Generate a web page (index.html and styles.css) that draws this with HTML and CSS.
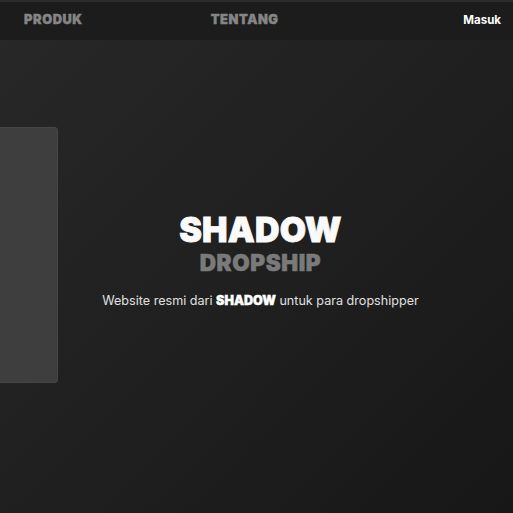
FILE: index.html
```html
<!DOCTYPE html>
<html lang="en">
<head>
    <meta charset="UTF-8">
    <meta name="viewport" content="width=device-width, initial-scale=1.0">
    <title>Shadow Dropship</title>
    <link rel="stylesheet" href="styles.css">
</head>
<body>
    <nav class="navbar">
        <a class="nav-link" href="#">PRODUK</a>
        <a class="nav-link" href="#">TENTANG</a>
        <a class="nav-login" href="#">Masuk</a>
    </nav>

    <main class="hero">
        <div class="slide-card"></div>
        <div class="hero-text">
            <h1 class="brand">SHADOW</h1>
            <h2 class="brand-sub">DROPSHIP</h2>
            <p class="tagline">Website resmi dari <strong>SHADOW</strong> untuk para dropshipper</p>
        </div>
    </main>
</body>
</html>
```

FILE: styles.css
```css
* {
    margin: 0;
    padding: 0;
    box-sizing: border-box;
}

body {
    font-family: Inter, 'Noto Sans', sans-serif;
    background: linear-gradient(135deg, #282828 0%, #1f1f1f 55%, #171717 100%);
    min-height: 100vh;
    color: #fff;
    border-top: 2px solid #2c2c2c;
}

.navbar {
    display: flex;
    align-items: center;
    height: 38px;
    padding: 0 12px 3px 24px;
    background: #1c1c1c;
}

.nav-link {
    font-weight: 900;
    font-size: 12.8px;
    letter-spacing: 0.6px;
    color: #858585;
    text-decoration: none;
    -webkit-text-stroke: 0.4px #858585;
}

.nav-link + .nav-link {
    margin-left: 128px;
}

.nav-login {
    margin-left: auto;
    font-weight: 700;
    font-size: 11.5px;
    color: #fff;
    text-decoration: none;
}

.hero {
    display: grid;
    grid-template-columns: 58px 1fr 58px;
    padding-top: 87px;
}

.slide-card {
    height: 256px;
    background: #3e3e3e;
    border: 1px solid #464646;
    border-left: none;
    border-radius: 0 4px 4px 0;
}

.hero-text {
    display: flex;
    flex-direction: column;
    align-items: center;
    padding: 83px 0 0 8px;
}

.brand {
    font-weight: 900;
    font-size: 34px;
    line-height: 40px;
    letter-spacing: 0.2px;
    color: #fafafa;
    -webkit-text-stroke: 0.8px #fafafa;
}

.brand-sub {
    font-weight: 900;
    font-size: 22.5px;
    line-height: 26px;
    letter-spacing: 0.6px;
    color: #7a7a7a;
    -webkit-text-stroke: 0.6px #7a7a7a;
}

.tagline {
    margin-top: 17px;
    font-size: 12.6px;
    font-weight: 400;
    color: #e0e0e0;
    white-space: nowrap;
}

.tagline strong {
    font-weight: 900;
    color: #fff;
    -webkit-text-stroke: 0.4px #fff;
}
```
